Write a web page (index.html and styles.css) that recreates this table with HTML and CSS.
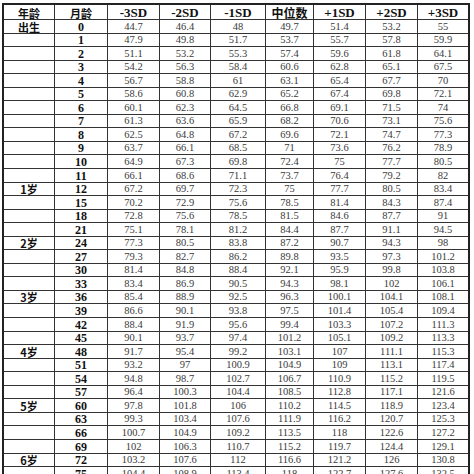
FILE: index.html
```html
<!DOCTYPE html>
<html lang="zh">
<head>
<meta charset="utf-8">
<link rel="stylesheet" href="styles.css">
</head>
<body>
<div class="sheet">
<div class="a">年龄</div><div class="a">月龄</div><div class="h">-3SD</div><div class="h">-2SD</div><div class="h">-1SD</div><div class="a big">中位数</div><div class="h">+1SD</div><div class="h">+2SD</div><div class="h">+3SD</div>
<div class="a">出生</div><div class="m">0</div><div>44.7</div><div>46.4</div><div>48</div><div>49.7</div><div>51.4</div><div>53.2</div><div>55</div>
<div></div><div class="m">1</div><div>47.9</div><div>49.8</div><div>51.7</div><div>53.7</div><div>55.7</div><div>57.8</div><div>59.9</div>
<div></div><div class="m">2</div><div>51.1</div><div>53.2</div><div>55.3</div><div>57.4</div><div>59.6</div><div>61.8</div><div>64.1</div>
<div></div><div class="m">3</div><div>54.2</div><div>56.3</div><div>58.4</div><div>60.6</div><div>62.8</div><div>65.1</div><div>67.5</div>
<div></div><div class="m">4</div><div>56.7</div><div>58.8</div><div>61</div><div>63.1</div><div>65.4</div><div>67.7</div><div>70</div>
<div></div><div class="m">5</div><div>58.6</div><div>60.8</div><div>62.9</div><div>65.2</div><div>67.4</div><div>69.8</div><div>72.1</div>
<div></div><div class="m">6</div><div>60.1</div><div>62.3</div><div>64.5</div><div>66.8</div><div>69.1</div><div>71.5</div><div>74</div>
<div></div><div class="m">7</div><div>61.3</div><div>63.6</div><div>65.9</div><div>68.2</div><div>70.6</div><div>73.1</div><div>75.6</div>
<div></div><div class="m">8</div><div>62.5</div><div>64.8</div><div>67.2</div><div>69.6</div><div>72.1</div><div>74.7</div><div>77.3</div>
<div></div><div class="m">9</div><div>63.7</div><div>66.1</div><div>68.5</div><div>71</div><div>73.6</div><div>76.2</div><div>78.9</div>
<div></div><div class="m">10</div><div>64.9</div><div>67.3</div><div>69.8</div><div>72.4</div><div>75</div><div>77.7</div><div>80.5</div>
<div></div><div class="m">11</div><div>66.1</div><div>68.6</div><div>71.1</div><div>73.7</div><div>76.4</div><div>79.2</div><div>82</div>
<div class="a">1岁</div><div class="m">12</div><div>67.2</div><div>69.7</div><div>72.3</div><div>75</div><div>77.7</div><div>80.5</div><div>83.4</div>
<div></div><div class="m">15</div><div>70.2</div><div>72.9</div><div>75.6</div><div>78.5</div><div>81.4</div><div>84.3</div><div>87.4</div>
<div></div><div class="m">18</div><div>72.8</div><div>75.6</div><div>78.5</div><div>81.5</div><div>84.6</div><div>87.7</div><div>91</div>
<div></div><div class="m">21</div><div>75.1</div><div>78.1</div><div>81.2</div><div>84.4</div><div>87.7</div><div>91.1</div><div>94.5</div>
<div class="a">2岁</div><div class="m">24</div><div>77.3</div><div>80.5</div><div>83.8</div><div>87.2</div><div>90.7</div><div>94.3</div><div>98</div>
<div></div><div class="m">27</div><div>79.3</div><div>82.7</div><div>86.2</div><div>89.8</div><div>93.5</div><div>97.3</div><div>101.2</div>
<div></div><div class="m">30</div><div>81.4</div><div>84.8</div><div>88.4</div><div>92.1</div><div>95.9</div><div>99.8</div><div>103.8</div>
<div></div><div class="m">33</div><div>83.4</div><div>86.9</div><div>90.5</div><div>94.3</div><div>98.1</div><div>102</div><div>106.1</div>
<div class="a">3岁</div><div class="m">36</div><div>85.4</div><div>88.9</div><div>92.5</div><div>96.3</div><div>100.1</div><div>104.1</div><div>108.1</div>
<div></div><div class="m">39</div><div>86.6</div><div>90.1</div><div>93.8</div><div>97.5</div><div>101.4</div><div>105.4</div><div>109.4</div>
<div></div><div class="m">42</div><div>88.4</div><div>91.9</div><div>95.6</div><div>99.4</div><div>103.3</div><div>107.2</div><div>111.3</div>
<div></div><div class="m">45</div><div>90.1</div><div>93.7</div><div>97.4</div><div>101.2</div><div>105.1</div><div>109.2</div><div>113.3</div>
<div class="a">4岁</div><div class="m">48</div><div>91.7</div><div>95.4</div><div>99.2</div><div>103.1</div><div>107</div><div>111.1</div><div>115.3</div>
<div></div><div class="m">51</div><div>93.2</div><div>97</div><div>100.9</div><div>104.9</div><div>109</div><div>113.1</div><div>117.4</div>
<div></div><div class="m">54</div><div>94.8</div><div>98.7</div><div>102.7</div><div>106.7</div><div>110.9</div><div>115.2</div><div>119.5</div>
<div></div><div class="m">57</div><div>96.4</div><div>100.3</div><div>104.4</div><div>108.5</div><div>112.8</div><div>117.1</div><div>121.6</div>
<div class="a">5岁</div><div class="m">60</div><div>97.8</div><div>101.8</div><div>106</div><div>110.2</div><div>114.5</div><div>118.9</div><div>123.4</div>
<div></div><div class="m">63</div><div>99.3</div><div>103.4</div><div>107.6</div><div>111.9</div><div>116.2</div><div>120.7</div><div>125.3</div>
<div></div><div class="m">66</div><div>100.7</div><div>104.9</div><div>109.2</div><div>113.5</div><div>118</div><div>122.6</div><div>127.2</div>
<div></div><div class="m">69</div><div>102</div><div>106.3</div><div>110.7</div><div>115.2</div><div>119.7</div><div>124.4</div><div>129.1</div>
<div class="a">6岁</div><div class="m">72</div><div>103.2</div><div>107.6</div><div>112</div><div>116.6</div><div>121.2</div><div>126</div><div>130.8</div>
<div></div><div class="m">75</div><div>104.4</div><div>108.9</div><div>113.4</div><div>118</div><div>122.7</div><div>127.6</div><div>132.5</div>
</div>
</body>
</html>
```

FILE: styles.css
```css
html, body {
  margin: 0;
  padding: 0;
  background: #fff;
  width: 474px;
  height: 474px;
  overflow: hidden;
}
.sheet {
  margin: 3px 0 0 2px;
  width: 464px;
  display: grid;
  grid-template-columns: 50px 52px 51px 50px 54px 47px 51px 51px 50px;
  grid-template-rows: 14px repeat(35, 12.56px);
  gap: 1px;
  background: #333;
  border: 2px solid #222;
  font-family: "Liberation Serif", serif;
  font-size: 10.5px;
  color: #3a3a3a;
}
.sheet > div {
  background: #fff;
  display: flex;
  align-items: flex-end;
  justify-content: center;
  line-height: 12px;
  white-space: nowrap;
}
.sheet > .h {
  font-weight: bold;
  font-size: 13px;
  color: #111;
  line-height: 13px;
}
.sheet > .a {
  font-family: "Noto Sans CJK SC", sans-serif;
  font-weight: bold;
  font-size: 11px;
  color: #111;
  line-height: 12px;
}
.sheet > .big {
  font-size: 12px;
}
.sheet > .m {
  font-weight: bold;
  font-size: 12px;
  color: #111;
  line-height: 12px;
}
```
